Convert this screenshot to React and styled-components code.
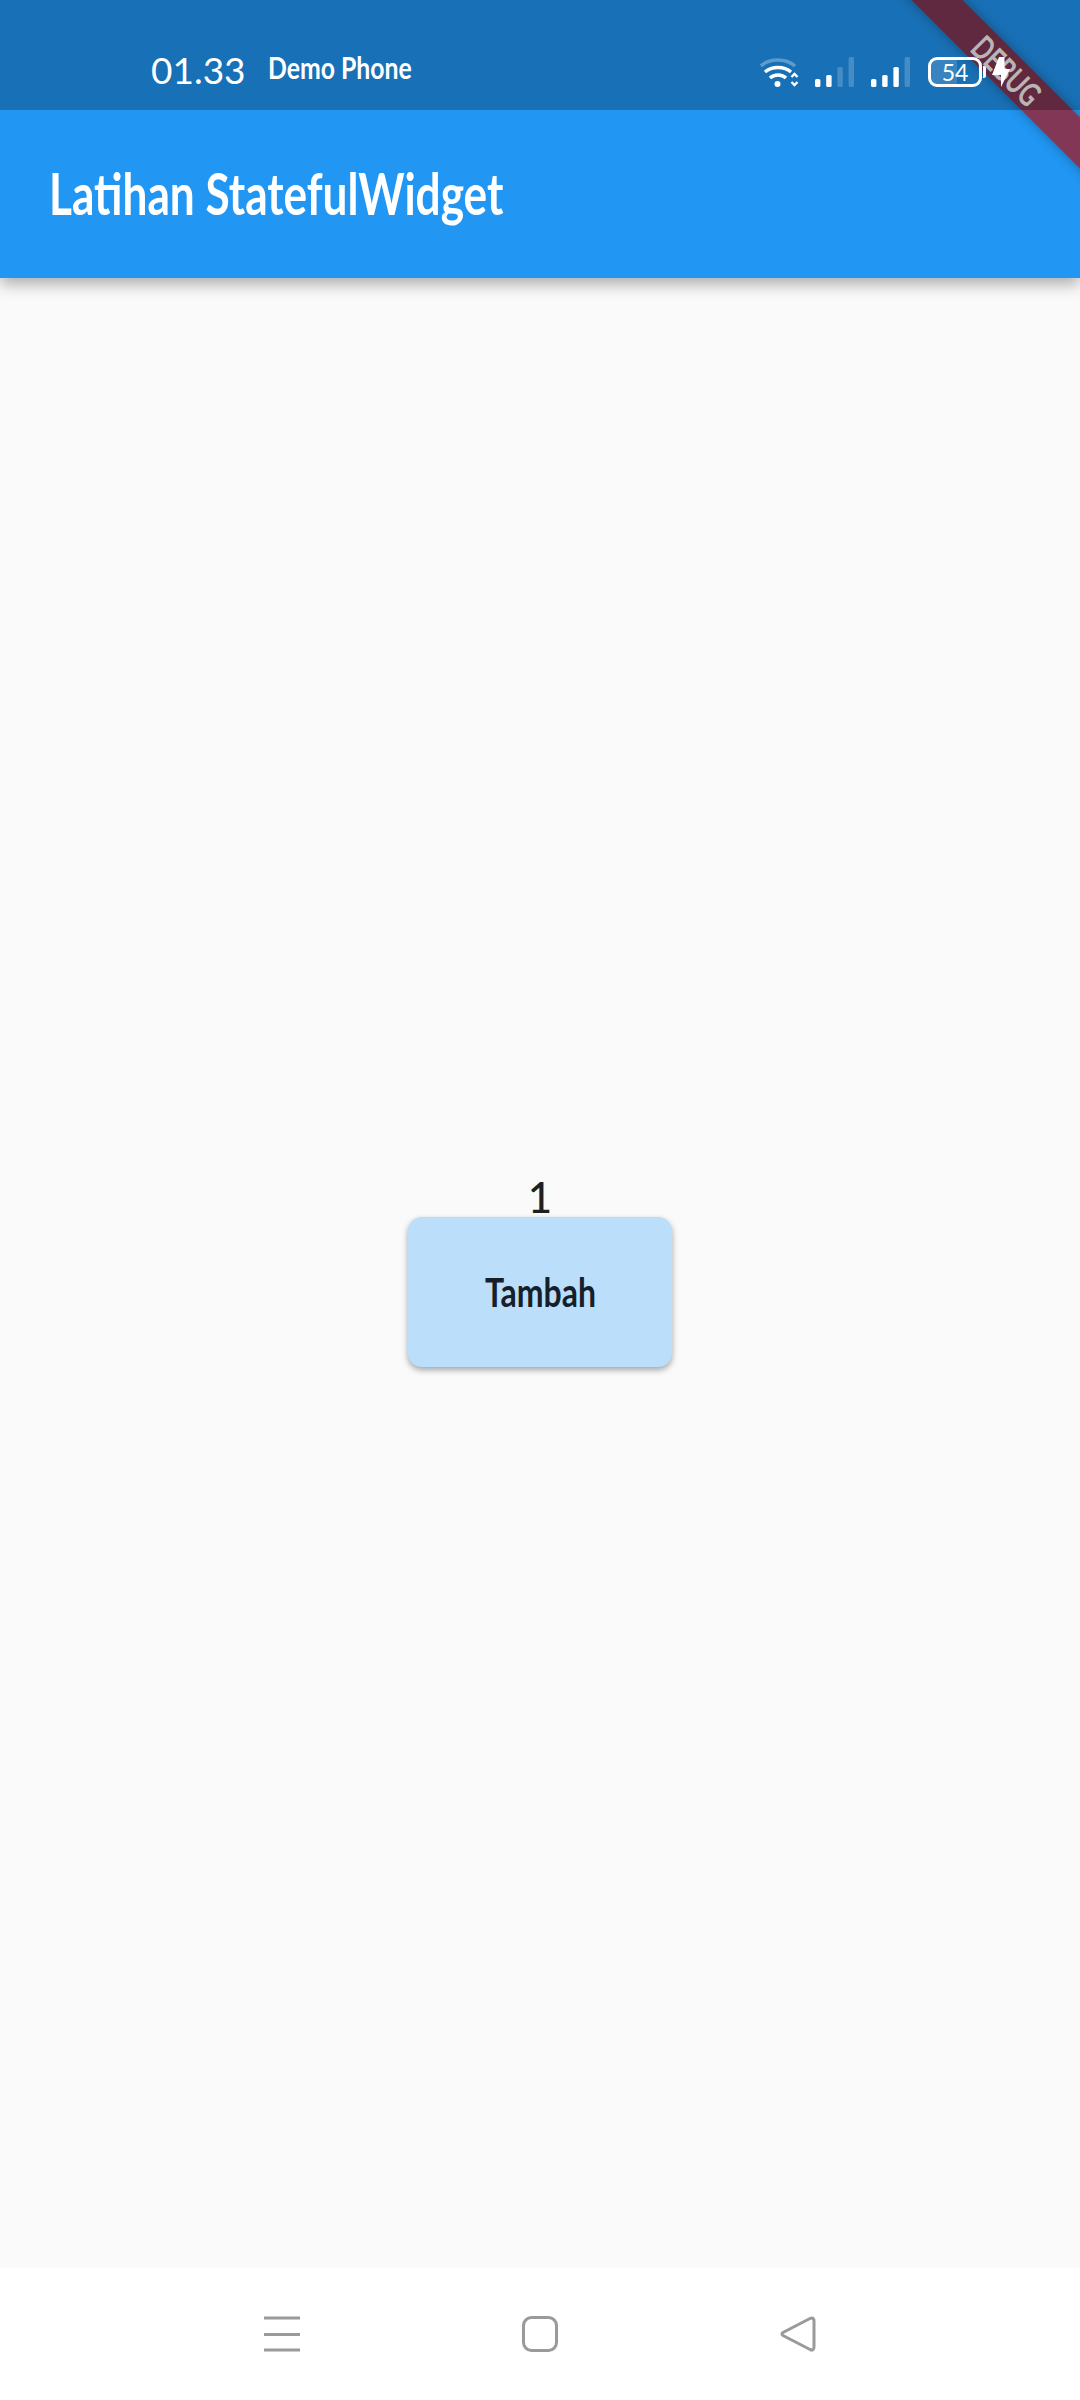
import React from "react"
import styled, { createGlobalStyle } from "styled-components"

const colors = {
  appBar: "#2196f3",
  page: "#fafafa",
  button: "#bbdefb",
  icon: "#9a9a9a",
  ink: "#16202a"
}

const GlobalStyle = createGlobalStyle`
  html, body {
    margin: 0;
    padding: 0;
    background: ${colors.page};
  }
  * {
    box-sizing: border-box;
  }
`

const Screen = styled.div`
  position: relative;
  display: flex;
  flex-direction: column;
  width: 1080px;
  height: 2400px;
  overflow: hidden;
  font-family: Lato, "Noto Sans", sans-serif;
`

// The installed fonts are wider than the one in the app, so squeeze them.
const Squeeze = styled.span`
  display: inline-block;
  white-space: nowrap;
  transform: scaleX(${p => p.$x});
  transform-origin: ${p => p.$origin || "center"};
`

const Header = styled.div`
  position: relative;
  background: ${colors.appBar};
  box-shadow: 0 6px 15px rgba(0, 0, 0, 0.32);
`

// Sits above the ribbon: the system scrim darkens it, the icons stay white.
const StatusBar = styled.div`
  position: relative;
  z-index: 2;
  display: flex;
  align-items: flex-start;
  height: 110px;
  padding-left: 151px;
  background: rgba(0, 0, 0, 0.25);
  color: #fff;
`

const Time = styled.span`
  width: 117px;
  margin-top: 47px;
  font-size: 37px;
  font-weight: 400;
  line-height: 45px;
`

const Carrier = styled.span`
  margin-top: 49px;
  font-size: 31px;
  font-weight: 700;
  line-height: 36px;
`

const StatusIcons = styled.div`
  display: flex;
  align-items: flex-end;
  height: 30px;
  margin: 57px 0 0 auto;
  padding-right: 70px;
`

const Signal = styled.svg`
  display: block;
  width: 39px;
  height: 30px;
  margin-left: ${p => p.$gap}px;
`

const Wifi = styled.svg`
  display: block;
  width: 40px;
  height: 30px;
`

const Battery = styled.div`
  width: 54px;
  height: 30px;
  margin-left: 18px;
  border: 3px solid #fff;
  border-radius: 9px;
  background: linear-gradient(
    to right,
    rgba(255, 255, 255, 0.14) 54%,
    transparent 54%
  );
  font-size: 23px;
  font-weight: 400;
  line-height: 24px;
  text-align: center;
  color: #fff;
`

const BatteryCap = styled.div`
  width: 3px;
  height: 12px;
  margin: 0 0 9px 1px;
  border-radius: 0 2px 2px 0;
  background: #fff;
`

const Bolt = styled.svg`
  display: block;
  width: 18px;
  height: 30px;
  margin-left: 6px;
`

const AppBar = styled.header`
  display: flex;
  align-items: center;
  height: 168px;
  padding: 0 0 2px 49px;
`

const Title = styled.h1`
  margin: 0;
  font-size: 57px;
  font-weight: 700;
  line-height: 60px;
  color: #fff;
`

const Body = styled.main`
  flex: 1;
  display: flex;
  flex-direction: column;
  align-items: center;
  justify-content: center;
  background: ${colors.page};
`

const Count = styled.span`
  height: 38px;
  font-size: 42px;
  font-weight: 500;
  line-height: 36px;
  color: #1f1f1f;
`

const AddButton = styled.button`
  width: 264px;
  height: 150px;
  padding: 0;
  border: 0;
  border-radius: 14px;
  background: ${colors.button};
  box-shadow: 0 3px 6px rgba(0, 0, 0, 0.35);
  font-family: inherit;
  font-size: 40px;
  font-weight: 700;
  line-height: 46px;
  color: ${colors.ink};
`

const NavBar = styled.nav`
  display: flex;
  align-items: flex-start;
  justify-content: center;
  gap: 222px;
  height: 132px;
  padding-top: 48px;
  background: #fff;
`

const NavIcon = styled.svg`
  display: block;
  width: 36px;
  height: 36px;
  fill: none;
  stroke: ${colors.icon};
  stroke-width: 3;
`

const Ribbon = styled.div`
  position: absolute;
  z-index: 1;
  top: 52px;
  left: 857px;
  width: 300px;
  height: 36px;
  transform: rotate(45deg);
  background: rgba(182, 4, 0, 0.65);
  box-shadow: 0 0 12px rgba(0, 0, 0, 0.3);
  font-size: 33px;
  font-weight: 700;
  line-height: 36px;
  text-align: center;
  color: rgba(255, 255, 255, 0.95);
`

const SignalBars = ({ active, gap }) => (
  <Signal viewBox="0 0 39 30" $gap={gap}>
    {[8, 12, 20, 30].map((h, i) => (
      <rect
        key={i}
        x={i * 11.2}
        y={30 - h}
        width="5.4"
        height={h}
        rx="1.5"
        fill="#fff"
        opacity={i < active ? 1 : 0.2}
      />
    ))}
  </Signal>
)

const App = () => (
  <Screen>
    <GlobalStyle />
    <Header>
      <StatusBar>
        <Time>01.33</Time>
        <Carrier>
          <Squeeze $x={0.8} $origin="left">
            Demo Phone
          </Squeeze>
        </Carrier>
        <StatusIcons>
          <Wifi viewBox="0 0 40 30" fill="none" stroke="#fff" strokeWidth="3.4">
            <path d="M2 9C10 1 27 1 36 9" opacity="0.3" />
            <path d="M6 15C13 9 25 9 32 15" />
            <path d="M11 21C15 17 23 17 27 21" />
            <circle cx="18.5" cy="27" r="3" fill="#fff" stroke="none" />
            <path d="M32.5 20L35.5 17L38.5 20M32.5 25L35.5 28L38.5 25" strokeWidth="2.4" />
          </Wifi>
          <SignalBars active={2} gap={16} />
          <SignalBars active={3} gap={17} />
          <Battery>54</Battery>
          <BatteryCap />
          <Bolt viewBox="0 0 18 30">
            <path d="M7 0H12.5V12H18L9 30V18H0Z" fill="#fff" />
          </Bolt>
        </StatusIcons>
      </StatusBar>
      <AppBar>
        <Title>
          <Squeeze $x={0.775} $origin="left">
            Latihan StatefulWidget
          </Squeeze>
        </Title>
      </AppBar>
      <Ribbon>
        <Squeeze $x={0.72}>DEBUG</Squeeze>
      </Ribbon>
    </Header>
    <Body>
      <Count>1</Count>
      <AddButton>
        <Squeeze $x={0.8}>Tambah</Squeeze>
      </AddButton>
    </Body>
    <NavBar>
      <NavIcon viewBox="0 0 36 36">
        <path d="M0 2H36M0 18.5H36M0 34H36" />
      </NavIcon>
      <NavIcon viewBox="0 0 36 36">
        <rect x="1.5" y="1.5" width="33" height="33" rx="8" />
      </NavIcon>
      <NavIcon viewBox="0 0 36 36">
        <path d="M30 2.5L3 16.5Q1 18 3 19.5L30 33.5Q34 35 34 31V5Q34 1 30 2.5Z" />
      </NavIcon>
    </NavBar>
  </Screen>
)

export default App
